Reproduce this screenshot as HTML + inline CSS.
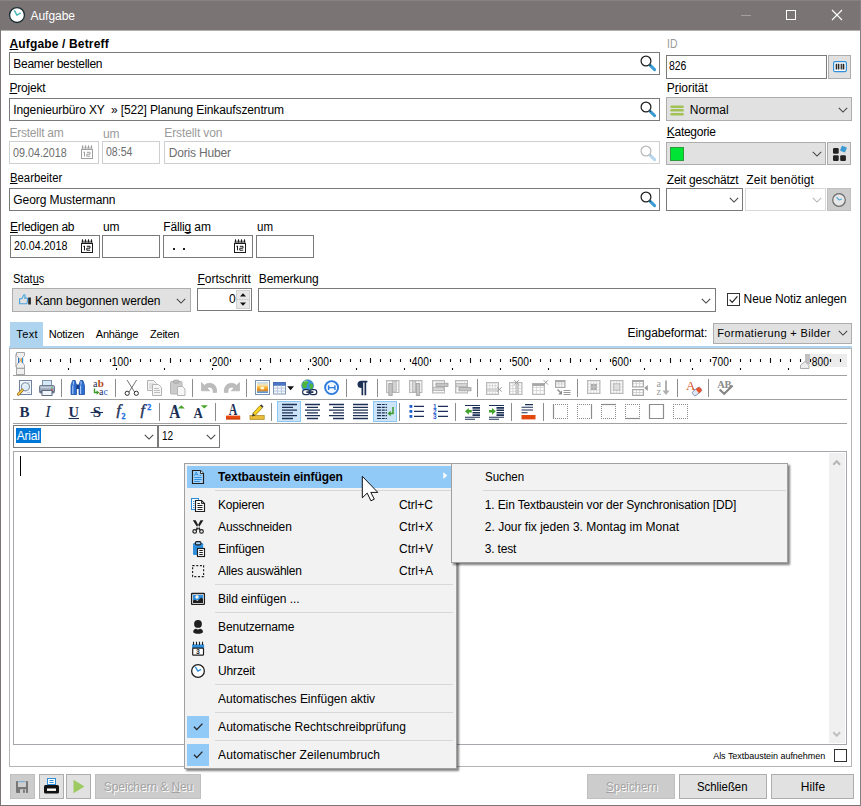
<!DOCTYPE html>
<html><head><meta charset="utf-8"><title>Aufgabe</title>
<style>
html,body{margin:0;padding:0;background:#fff;}
body{width:861px;height:806px;position:relative;overflow:hidden;font-family:"Liberation Sans",sans-serif;}
body>div,body>span,body>svg{position:absolute;display:block;}
svg{overflow:visible;}
u{text-decoration:underline;text-underline-offset:1px;text-decoration-skip-ink:none;}
</style></head><body>
<div style="left:0px;top:0px;width:861px;height:806px;background:#fff;border:1px solid #7a7574;box-sizing:border-box;"></div>
<div style="left:0px;top:0px;width:861px;height:30px;background:#7a7574;"></div>
<div style="left:0px;top:30px;width:861px;height:1px;background:#b3b0af;"></div>
<div style="left:0px;top:0px;width:861px;height:1px;background:#878382;"></div>
<div style="left:0px;top:30px;width:1px;height:776px;background:#7a7574;"></div>
<div style="left:860px;top:0px;width:1px;height:806px;background:#858180;"></div>
<div style="left:0px;top:805px;width:861px;height:1px;background:#7a7574;"></div>
<svg style="left:8px;top:6px;" width="18" height="18" viewBox="0 0 18 18"><circle cx="9" cy="9" r="7.450" fill="#fff" stroke="#1a2e33" stroke-width="1.350"/><path d="M6.300 4.400L8.900 9.200L12.700 6.800" stroke="#4bb8b8" stroke-width="1.500" fill="none" stroke-linejoin="round"/></svg>
<span style="left:30.50px;top:6.00px;font:12px/20px 'Liberation Sans',sans-serif;color:#fff;white-space:pre;letter-spacing:-0.042px;">Aufgabe</span>
<div style="left:741px;top:15px;width:10px;height:1px;background:#a39f9e;"></div>
<div style="left:786px;top:10px;width:10px;height:10px;border:1px solid #fff;box-sizing:border-box;"></div>
<svg style="left:831px;top:9px;" width="12" height="12" viewBox="0 0 12 12"><path d="M1 1 L11 11 M11 1 L1 11" stroke="#fff" stroke-width="1.1"/></svg>
<span style="left:9.50px;top:34.00px;font:bold 12px/20px 'Liberation Sans',sans-serif;color:#000;white-space:pre;letter-spacing:0.153px;"><u>A</u>ufgabe / Betreff</span>
<div style="left:9px;top:52px;width:651px;height:23px;background:#fff;border:1px solid #7a7a7a;box-sizing:border-box;"></div>
<span style="left:13.30px;top:54.00px;font:12px/20px 'Liberation Sans',sans-serif;color:#000;white-space:pre;letter-spacing:-0.278px;">Beamer bestellen</span>
<svg style="left:638px;top:53px;" width="20" height="20" viewBox="0 0 20 20"><circle cx="8" cy="8" r="4.9" fill="none" stroke="#1f1f1f" stroke-width="1.25"/><path d="M12.2 12.4 L16.6 16.6" stroke="#3d9bd4" stroke-width="3.1" stroke-linecap="round"/><path d="M11.4 11.4 L12.6 12.6" stroke="#1f1f1f" stroke-width="1.3"/></svg>
<span style="left:9.50px;top:78.00px;font:12px/20px 'Liberation Sans',sans-serif;color:#000;white-space:pre;letter-spacing:-0.196px;"><u>P</u>rojekt</span>
<div style="left:9px;top:98px;width:651px;height:23px;background:#fff;border:1px solid #7a7a7a;box-sizing:border-box;"></div>
<span style="left:13.30px;top:100.00px;font:12px/20px 'Liberation Sans',sans-serif;color:#000;white-space:pre;letter-spacing:-0.123px;">Ingenieurbüro XY  » [522] Planung Einkaufszentrum</span>
<svg style="left:638px;top:99px;" width="20" height="20" viewBox="0 0 20 20"><circle cx="8" cy="8" r="4.9" fill="none" stroke="#1f1f1f" stroke-width="1.25"/><path d="M12.2 12.4 L16.6 16.6" stroke="#3d9bd4" stroke-width="3.1" stroke-linecap="round"/><path d="M11.4 11.4 L12.6 12.6" stroke="#1f1f1f" stroke-width="1.3"/></svg>
<span style="left:9.50px;top:123.00px;font:12px/20px 'Liberation Sans',sans-serif;color:#9a9a9a;white-space:pre;letter-spacing:-0.242px;">Erstellt am</span>
<span style="left:103.00px;top:124.00px;font:12px/20px 'Liberation Sans',sans-serif;color:#9a9a9a;white-space:pre;letter-spacing:-0.125px;">um</span>
<span style="left:164.30px;top:123.00px;font:12px/20px 'Liberation Sans',sans-serif;color:#9a9a9a;white-space:pre;letter-spacing:-0.107px;">Erstellt von</span>
<div style="left:9px;top:141px;width:90px;height:23px;background:#fff;border:1px solid #cfcfcf;box-sizing:border-box;"></div>
<span style="left:13.30px;top:143.00px;font:12px/20px 'Liberation Sans',sans-serif;color:#6d6d6d;white-space:pre;transform:scaleX(0.8950);transform-origin:0 0;">09.04.2018</span>
<svg style="left:81px;top:145px;" width="12" height="14" viewBox="0 0 12 14"><rect x="0.500" y="1.600" width="11" height="3.400" fill="#d4d4d4"/><path d="M1.500 0.300v3.200 M4.500 0.300v3.200 M7.500 0.300v3.200 M10.500 0.300v3.200" stroke="#a0a0a0" stroke-width="1"/><rect x="0.500" y="4.500" width="11" height="9" fill="#fff" stroke="#a0a0a0" stroke-width="1"/><path d="M3.500 6.800v4.600 M2.400 7.300h1.100 M5.800 7.300h3.200v1.900h-3.200v2h3.400" fill="none" stroke="#a0a0a0" stroke-width="1"/></svg>
<div style="left:102px;top:141px;width:58px;height:23px;background:#fff;border:1px solid #cfcfcf;box-sizing:border-box;"></div>
<span style="left:105.60px;top:142.00px;font:12px/20px 'Liberation Sans',sans-serif;color:#6d6d6d;white-space:pre;transform:scaleX(0.8800);transform-origin:0 0;">08:54</span>
<div style="left:164px;top:141px;width:496px;height:23px;background:#fff;border:1px solid #cfcfcf;box-sizing:border-box;"></div>
<span style="left:168.80px;top:143.00px;font:12px/20px 'Liberation Sans',sans-serif;color:#6d6d6d;white-space:pre;letter-spacing:-0.180px;">Doris Huber</span>
<svg style="left:638px;top:143px;" width="20" height="20" viewBox="0 0 20 20"><circle cx="8" cy="8" r="4.9" fill="none" stroke="#b9b9b9" stroke-width="1.25"/><path d="M12.2 12.4 L16.6 16.6" stroke="#b5d6ee" stroke-width="3.1" stroke-linecap="round"/><path d="M11.4 11.4 L12.6 12.6" stroke="#b9b9b9" stroke-width="1.3"/></svg>
<span style="left:9.50px;top:168.00px;font:12px/20px 'Liberation Sans',sans-serif;color:#000;white-space:pre;transform:scaleX(0.9427);transform-origin:0 0;"><u>B</u>earbeiter</span>
<div style="left:9px;top:188px;width:651px;height:23px;background:#fff;border:1px solid #7a7a7a;box-sizing:border-box;"></div>
<span style="left:13.30px;top:190.00px;font:12px/20px 'Liberation Sans',sans-serif;color:#000;white-space:pre;letter-spacing:-0.078px;">Georg Mustermann</span>
<svg style="left:638px;top:189px;" width="20" height="20" viewBox="0 0 20 20"><circle cx="8" cy="8" r="4.9" fill="none" stroke="#1f1f1f" stroke-width="1.25"/><path d="M12.2 12.4 L16.6 16.6" stroke="#3d9bd4" stroke-width="3.1" stroke-linecap="round"/><path d="M11.4 11.4 L12.6 12.6" stroke="#1f1f1f" stroke-width="1.3"/></svg>
<span style="left:10.00px;top:217.00px;font:12px/20px 'Liberation Sans',sans-serif;color:#000;white-space:pre;letter-spacing:-0.261px;"><u>E</u>rledigen ab</span>
<span style="left:103.00px;top:217.00px;font:12px/20px 'Liberation Sans',sans-serif;color:#000;white-space:pre;letter-spacing:-0.125px;">um</span>
<span style="left:163.30px;top:217.00px;font:12px/20px 'Liberation Sans',sans-serif;color:#000;white-space:pre;letter-spacing:-0.141px;">Fälli<u>g</u> am</span>
<span style="left:257.00px;top:217.00px;font:12px/20px 'Liberation Sans',sans-serif;color:#000;white-space:pre;transform:scaleX(0.9624);transform-origin:0 0;">um</span>
<div style="left:10px;top:235px;width:90px;height:23px;background:#fff;border:1px solid #7a7a7a;box-sizing:border-box;"></div>
<span style="left:14.20px;top:236.00px;font:12px/20px 'Liberation Sans',sans-serif;color:#000;white-space:pre;transform:scaleX(0.8883);transform-origin:0 0;">20.04.2018</span>
<svg style="left:81px;top:239px;" width="12" height="14" viewBox="0 0 12 14"><rect x="0.500" y="1.600" width="11" height="3.400" fill="#8a8a8a"/><path d="M1.500 0.300v3.200 M4.500 0.300v3.200 M7.500 0.300v3.200 M10.500 0.300v3.200" stroke="#1a1a1a" stroke-width="1"/><rect x="0.500" y="4.500" width="11" height="9" fill="#fff" stroke="#1a1a1a" stroke-width="1"/><path d="M3.500 6.800v4.600 M2.400 7.300h1.100 M5.800 7.300h3.200v1.900h-3.200v2h3.400" fill="none" stroke="#1a1a1a" stroke-width="1"/></svg>
<div style="left:102px;top:235px;width:58px;height:23px;background:#fff;border:1px solid #7a7a7a;box-sizing:border-box;"></div>
<div style="left:163px;top:235px;width:90px;height:23px;background:#fff;border:1px solid #7a7a7a;box-sizing:border-box;"></div>
<div style="left:173px;top:248px;width:2px;height:2px;background:#222;"></div>
<div style="left:183px;top:248px;width:2px;height:2px;background:#222;"></div>
<svg style="left:234px;top:239px;" width="12" height="14" viewBox="0 0 12 14"><rect x="0.500" y="1.600" width="11" height="3.400" fill="#8a8a8a"/><path d="M1.500 0.300v3.200 M4.500 0.300v3.200 M7.500 0.300v3.200 M10.500 0.300v3.200" stroke="#1a1a1a" stroke-width="1"/><rect x="0.500" y="4.500" width="11" height="9" fill="#fff" stroke="#1a1a1a" stroke-width="1"/><path d="M3.500 6.800v4.600 M2.400 7.300h1.100 M5.800 7.300h3.200v1.900h-3.200v2h3.400" fill="none" stroke="#1a1a1a" stroke-width="1"/></svg>
<div style="left:256px;top:235px;width:58px;height:23px;background:#fff;border:1px solid #7a7a7a;box-sizing:border-box;"></div>
<span style="left:12.50px;top:269.00px;font:12px/20px 'Liberation Sans',sans-serif;color:#000;white-space:pre;transform:scaleX(0.9206);transform-origin:0 0;">Stat<u>u</u>s</span>
<div style="left:12px;top:288px;width:179px;height:24px;background:#e1e1e1;border:1px solid #adadad;box-sizing:border-box;"></div>
<svg style="left:18px;top:293px;" width="14" height="14" viewBox="0 0 14 14"><path d="M1.600 5.800h2.200l2-3.700c.4-.7 1.400-.3 1.300.5l-.4 2.500h2.100c.6 0 1 .5.900 1.100l-.6 3.700c-.1.500-.5.900-1 .900h-6.500z" fill="none" stroke="#4aa3df" stroke-width="1.100"/><rect x="10.200" y="4.500" width="2.700" height="7" fill="#2b2b2b"/></svg>
<span style="left:35.00px;top:291.00px;font:12px/20px 'Liberation Sans',sans-serif;color:#000;white-space:pre;letter-spacing:-0.105px;">Kann begonnen werden</span>
<svg style="left:174.5px;top:296.5px;" width="12" height="8" viewBox="0 0 12 8"><path d="M1.7999999999999998 1.9 L6 6.1 L10.2 1.9" fill="none" stroke="#444" stroke-width="1.05"/></svg>
<span style="left:197.50px;top:269.00px;font:12px/20px 'Liberation Sans',sans-serif;color:#000;white-space:pre;letter-spacing:-0.007px;"><u>F</u>ortschritt</span>
<div style="left:197px;top:288px;width:55px;height:23px;background:#fff;border:1px solid #7a7a7a;box-sizing:border-box;"></div>
<span style="left:228.90px;top:289.00px;font:12px/20px 'Liberation Sans',sans-serif;color:#000;white-space:pre;">0</span>
<div style="left:236px;top:290px;width:14px;height:10px;background:#e8e8e8;border:1px solid #d0d0d0;box-sizing:border-box;"></div>
<div style="left:236px;top:299px;width:14px;height:10px;background:#e8e8e8;border:1px solid #d0d0d0;box-sizing:border-box;"></div>
<svg style="left:236px;top:290px;" width="14" height="19" viewBox="0 0 14 19"><path d="M4 6.500L7 3.200L10 6.500z M4 12.400L7 15.700L10 12.400z" fill="#111"/></svg>
<span style="left:258.80px;top:269.00px;font:12px/20px 'Liberation Sans',sans-serif;color:#000;white-space:pre;letter-spacing:-0.172px;">Bemerkung</span>
<div style="left:258px;top:288px;width:458px;height:24px;background:#fff;border:1px solid #7a7a7a;box-sizing:border-box;"></div>
<svg style="left:700px;top:296.5px;" width="12" height="8" viewBox="0 0 12 8"><path d="M1.7999999999999998 1.9 L6 6.1 L10.2 1.9" fill="none" stroke="#444" stroke-width="1.05"/></svg>
<div style="left:727px;top:293px;width:13px;height:13px;background:#fff;border:1px solid #333;box-sizing:border-box;"></div>
<svg style="left:727px;top:293px;" width="13" height="13" viewBox="0 0 13 13"><path d="M2.6 6.6L5.2 9.4L10.4 3.4" fill="none" stroke="#222" stroke-width="1.2"/></svg>
<span style="left:743.60px;top:289.00px;font:12px/20px 'Liberation Sans',sans-serif;color:#000;white-space:pre;letter-spacing:-0.134px;">Neue Notiz anlegen</span>
<span style="left:666.60px;top:34.00px;font:12px/20px 'Liberation Sans',sans-serif;color:#9a9a9a;white-space:pre;transform:scaleX(0.8667);transform-origin:0 0;">ID</span>
<div style="left:666px;top:55px;width:161px;height:24px;background:#fff;border:1px solid #7a7a7a;box-sizing:border-box;"></div>
<span style="left:669.40px;top:56.00px;font:12px/20px 'Liberation Sans',sans-serif;color:#000;white-space:pre;transform:scaleX(0.8700);transform-origin:0 0;">826</span>
<div style="left:828px;top:55px;width:23px;height:24px;background:#e1e1e1;border:1px solid #adadad;box-sizing:border-box;"></div>
<svg style="left:833px;top:61px;" width="14" height="12" viewBox="0 0 14 12"><rect x="0.600" y="0.600" width="12.800" height="10" rx="1.500" fill="#fff" stroke="#2f8fdc" stroke-width="1.200"/><path d="M3.300 2.800v5.600M5.300 2.800v5.600M8.800 2.800v5.600M10.700 2.800v5.600" stroke="#111" stroke-width="1.200"/><path d="M7 2.800v5.600" stroke="#111" stroke-width="0.700"/></svg>
<span style="left:666.80px;top:78.00px;font:12px/20px 'Liberation Sans',sans-serif;color:#000;white-space:pre;letter-spacing:-0.047px;">P<u>r</u>iorität</span>
<div style="left:666px;top:97px;width:186px;height:24px;background:#e1e1e1;border:1px solid #adadad;box-sizing:border-box;"></div>
<svg style="left:670px;top:105px;" width="14" height="11" viewBox="0 0 14 11"><rect x="0.300" y="0.400" width="13.500" height="2.500" rx="1.200" fill="#a2c255"/><rect x="0.300" y="4.100" width="13.500" height="2.500" rx="1.200" fill="#a2c255"/><rect x="0.300" y="7.900" width="13.500" height="2.500" rx="1.200" fill="#a2c255"/></svg>
<span style="left:689.80px;top:100.00px;font:12px/20px 'Liberation Sans',sans-serif;color:#000;white-space:pre;letter-spacing:0.055px;">Normal</span>
<svg style="left:836.5px;top:106px;" width="12" height="8" viewBox="0 0 12 8"><path d="M1.7999999999999998 1.9 L6 6.1 L10.2 1.9" fill="none" stroke="#444" stroke-width="1.05"/></svg>
<span style="left:666.80px;top:122.00px;font:12px/20px 'Liberation Sans',sans-serif;color:#000;white-space:pre;letter-spacing:-0.284px;"><u>K</u>ategorie</span>
<div style="left:666px;top:142px;width:160px;height:23px;background:#e1e1e1;border:1px solid #adadad;box-sizing:border-box;"></div>
<div style="left:670px;top:147px;width:14px;height:14px;background:#00e436;border:1px solid #2e9a3c;box-sizing:border-box;"></div>
<svg style="left:810.5px;top:150px;" width="12" height="8" viewBox="0 0 12 8"><path d="M1.7999999999999998 1.9 L6 6.1 L10.2 1.9" fill="none" stroke="#444" stroke-width="1.05"/></svg>
<div style="left:827px;top:142px;width:24px;height:23px;background:#e1e1e1;border:1px solid #adadad;box-sizing:border-box;"></div>
<svg style="left:832px;top:145px;" width="16" height="17" viewBox="0 0 16 17"><rect x="1" y="3" width="5.700" height="5.700" rx="1.200" fill="#222"/><rect x="1" y="10.200" width="5.700" height="5.700" rx="1.200" fill="#222"/><rect x="8.200" y="10.200" width="5.700" height="5.700" rx="1.200" fill="#222"/><rect x="8.800" y="1.400" width="5.400" height="5.400" rx="0.800" fill="#3d9bd4" transform="rotate(22 11.500 4.100)"/></svg>
<span style="left:666.80px;top:170.00px;font:12px/20px 'Liberation Sans',sans-serif;color:#000;white-space:pre;letter-spacing:-0.219px;">Zeit geschätzt</span>
<span style="left:746.30px;top:170.00px;font:12px/20px 'Liberation Sans',sans-serif;color:#000;white-space:pre;letter-spacing:0.125px;">Zeit benötigt</span>
<div style="left:666px;top:188px;width:77px;height:23px;background:#fff;border:1px solid #7a7a7a;box-sizing:border-box;"></div>
<svg style="left:727.5px;top:195.5px;" width="12" height="8" viewBox="0 0 12 8"><path d="M1.7999999999999998 1.9 L6 6.1 L10.2 1.9" fill="none" stroke="#444" stroke-width="1.05"/></svg>
<div style="left:745px;top:188px;width:81px;height:23px;background:#fff;border:1px solid #d9d9d9;box-sizing:border-box;"></div>
<svg style="left:810.5px;top:195.5px;" width="12" height="8" viewBox="0 0 12 8"><path d="M1.7999999999999998 1.9 L6 6.1 L10.2 1.9" fill="none" stroke="#b5b5b5" stroke-width="1.05"/></svg>
<div style="left:827px;top:188px;width:24px;height:23px;background:#cccccc;border:1px solid #bfbfbf;box-sizing:border-box;"></div>
<svg style="left:831px;top:192px;" width="16" height="16" viewBox="0 0 16 16"><circle cx="8" cy="8" r="6.300" fill="#e6e6e6" stroke="#6a6a6a" stroke-width="1.200"/><path d="M8 8L5.600 5.200M8 8L11 7" stroke="#58a9d8" stroke-width="1.200"/></svg>
<div style="left:10px;top:322px;width:33px;height:25px;background:#aed4f0;"></div>
<div style="left:9px;top:346px;width:843px;height:2px;background:#aed4f0;"></div>
<span style="left:16.30px;top:324.00px;font:11px/20px 'Liberation Sans',sans-serif;color:#000;white-space:pre;letter-spacing:0.358px;">Text</span>
<span style="left:48.80px;top:324.00px;font:11px/20px 'Liberation Sans',sans-serif;color:#000;white-space:pre;letter-spacing:-0.292px;">Notizen</span>
<span style="left:95.80px;top:324.00px;font:11px/20px 'Liberation Sans',sans-serif;color:#000;white-space:pre;letter-spacing:-0.250px;">Anhänge</span>
<span style="left:150.00px;top:324.00px;font:11px/20px 'Liberation Sans',sans-serif;color:#000;white-space:pre;letter-spacing:-0.225px;">Zeiten</span>
<span style="left:627.60px;top:323.00px;font:12px/20px 'Liberation Sans',sans-serif;color:#000;white-space:pre;letter-spacing:-0.121px;">Eingabeformat:</span>
<div style="left:713px;top:323px;width:139px;height:21px;background:#e1e1e1;border:1px solid #adadad;box-sizing:border-box;"></div>
<span style="left:717.30px;top:323.00px;font:11px/20px 'Liberation Sans',sans-serif;color:#000;white-space:pre;letter-spacing:0.354px;">Formatierung + Bilder</span>
<svg style="left:836.5px;top:329.3px;" width="12" height="8" viewBox="0 0 12 8"><path d="M1.7999999999999998 1.9 L6 6.1 L10.2 1.9" fill="none" stroke="#444" stroke-width="1.05"/></svg>
<div style="left:9px;top:348px;width:843px;height:419px;background:#fff;border:1px solid #b4b4b4;box-sizing:border-box;"></div>
<svg style="left:13px;top:348px;" width="838" height="28" viewBox="0 0 838 28"><rect x="797" y="6" width="37" height="13" fill="#ececec"/><path d="M17.5 11v3M27.5 11v3M37.5 11v3M47.5 11v3M57.5 10v5M67.5 11v3M77.5 11v3M87.5 11v3M97.5 11v3M117.5 11v3M127.5 11v3M137.5 11v3M147.5 11v3M157.5 10v5M167.5 11v3M177.5 11v3M187.5 11v3M197.5 11v3M217.5 11v3M227.5 11v3M237.5 11v3M247.5 11v3M257.5 10v5M267.5 11v3M277.5 11v3M287.5 11v3M297.5 11v3M317.5 11v3M327.5 11v3M337.5 11v3M347.5 11v3M357.5 10v5M367.5 11v3M377.5 11v3M387.5 11v3M397.5 11v3M417.5 11v3M427.5 11v3M437.5 11v3M447.5 11v3M457.5 10v5M467.5 11v3M477.5 11v3M487.5 11v3M497.5 11v3M517.5 11v3M527.5 11v3M537.5 11v3M547.5 11v3M557.5 10v5M567.5 11v3M577.5 11v3M587.5 11v3M597.5 11v3M617.5 11v3M627.5 11v3M637.5 11v3M647.5 11v3M657.5 10v5M667.5 11v3M677.5 11v3M687.5 11v3M697.5 11v3M717.5 11v3M727.5 11v3M737.5 11v3M747.5 11v3M757.5 10v5M767.5 11v3M777.5 11v3M787.5 11v3M797.5 11v3M817.5 11v3M827.5 11v3" stroke="#111" stroke-width="1.1"/><path d="M97.5 11v3M117.5 11v3M197.5 11v3M217.5 11v3M297.5 11v3M317.5 11v3M397.5 11v3M417.5 11v3M497.5 11v3M517.5 11v3M597.5 11v3M617.5 11v3M697.5 11v3M717.5 11v3M797.5 11v3M817.5 11v3" stroke="#111" stroke-width="1.1"/><path d="M55.5 20v2M103.5 20v2M151.5 20v2M199.5 20v2M247.5 20v2M295.5 20v2M343.5 20v2M391.5 20v2M439.5 20v2M487.5 20v2M535.5 20v2M583.5 20v2M631.5 20v2M679.5 20v2M727.5 20v2M775.5 20v2" stroke="#111" stroke-width="1.1"/><text x="107.3" y="17.8" text-anchor="middle" font-family="Liberation Sans,sans-serif" font-size="12" textLength="17" lengthAdjust="spacingAndGlyphs" fill="#000">100</text><text x="207.3" y="17.8" text-anchor="middle" font-family="Liberation Sans,sans-serif" font-size="12" textLength="17" lengthAdjust="spacingAndGlyphs" fill="#000">200</text><text x="307.3" y="17.8" text-anchor="middle" font-family="Liberation Sans,sans-serif" font-size="12" textLength="17" lengthAdjust="spacingAndGlyphs" fill="#000">300</text><text x="407.3" y="17.8" text-anchor="middle" font-family="Liberation Sans,sans-serif" font-size="12" textLength="17" lengthAdjust="spacingAndGlyphs" fill="#000">400</text><text x="507.3" y="17.8" text-anchor="middle" font-family="Liberation Sans,sans-serif" font-size="12" textLength="17" lengthAdjust="spacingAndGlyphs" fill="#000">500</text><text x="607.3" y="17.8" text-anchor="middle" font-family="Liberation Sans,sans-serif" font-size="12" textLength="17" lengthAdjust="spacingAndGlyphs" fill="#000">600</text><text x="707.3" y="17.8" text-anchor="middle" font-family="Liberation Sans,sans-serif" font-size="12" textLength="17" lengthAdjust="spacingAndGlyphs" fill="#000">700</text><text x="807.3" y="17.8" text-anchor="middle" font-family="Liberation Sans,sans-serif" font-size="12" textLength="17" lengthAdjust="spacingAndGlyphs" fill="#000">800</text><rect x="2" y="6" width="1.6" height="13" fill="#c8c8c8"/><path d="M3.5 4.5h8v3L7.5 12L3.5 7.5z" fill="#f0f0f0" stroke="#a6a6a6"/><path d="M7.5 12L11.5 17.2v3h-8v-3z" fill="#f0f0f0" stroke="#a6a6a6"/><rect x="3.5" y="20.5" width="8" height="6" fill="#f0f0f0" stroke="#a6a6a6"/><rect x="5" y="10" width="1.2" height="5" fill="#2a6fc0"/><rect x="7.6" y="10.500" width="1.400" height="4" fill="#f2a640"/><rect x="9" y="10" width="1.200" height="5" fill="#2a8fe0"/><rect x="792" y="6" width="5" height="10" fill="#c0c0c0"/><path d="M787.500 17.200L792 13.500L796 17.200v3.300h-8.500z" fill="#ececec" stroke="#adadad"/></svg>
<div style="left:13px;top:375px;width:834px;height:1px;background:#a0a0a0;"></div>
<div style="left:13px;top:399px;width:834px;height:1px;background:#a0a0a0;"></div>
<div style="left:13px;top:423px;width:834px;height:1px;background:#a0a0a0;"></div>
<svg style="left:16px;top:380px;" width="16" height="16" viewBox="0 0 16 16"><rect x="3.500" y="0.500" width="12" height="14" fill="#f4f7fb" stroke="#6f82a0"/><path d="M11 12.500h3M12 2.500h2" stroke="#c3cfdf"/><circle cx="9.400" cy="6.800" r="4.100" fill="#dcecf8" stroke="#8595ad" stroke-width="1.100"/><path d="M7.400 5.600a2.600 2.600 0 0 1 2.600-1.200" stroke="#fff" fill="none"/><path d="M6.200 10.200L2.400 14.200" stroke="#8a6a20" stroke-width="3" stroke-linecap="round"/><path d="M6.200 10.200L2.400 14.200" stroke="#efc04a" stroke-width="1.800" stroke-linecap="round"/></svg>
<svg style="left:39px;top:380px;" width="16" height="16" viewBox="0 0 16 16"><rect x="3.500" y="0.500" width="9" height="6" fill="#d5e8f8" stroke="#7f92aa"/><rect x="0.500" y="5.500" width="15" height="7.500" rx="1.200" fill="#98a5b8" stroke="#6c7a90"/><rect x="1.500" y="6.500" width="13" height="1.800" fill="#c4cedb"/><rect x="1.200" y="11" width="13.600" height="1.600" fill="#56637a"/><rect x="3" y="10.500" width="10" height="5" fill="#eef5fc" stroke="#5e6b80"/><rect x="12.200" y="7.200" width="1.400" height="1.300" fill="#3cb54a"/><rect x="12.200" y="9.200" width="1.400" height="1.300" fill="#e0392b"/></svg>
<div style="left:61px;top:379px;width:1px;height:18px;background:#8c8c8c;"></div>
<svg style="left:70px;top:380px;" width="16" height="16" viewBox="0 0 16 16"><path d="M2.600 0.500h2.600l1.300 5v9h-5.500v-9z" fill="#2c6cd0" stroke="#1b4ea6" stroke-width="0.800"/><path d="M10.300 0.500h2.600l1.600 5v9h-5.500v-9z" fill="#2c6cd0" stroke="#1b4ea6" stroke-width="0.800"/><rect x="6.400" y="4.500" width="2.700" height="4.500" fill="#173f8c"/><path d="M2.800 5.500v8.500M10.600 5.500v8.500" stroke="#a9c8f2" stroke-width="1.200"/><path d="M3.400 1.200v3.500M11 1.200v3.500" stroke="#c4dbf8" stroke-width="0.900"/></svg>
<svg style="left:93px;top:380px;" width="16" height="16" viewBox="0 0 16 16"><text x="0" y="7" font-family="Liberation Serif,serif" font-size="10" fill="#1c2f55">a</text><text x="4.8" y="7" font-family="Liberation Serif,serif" font-size="11" font-weight="bold" fill="#b5471c">b</text><path d="M1.5 8.5v4h3.2" stroke="#3c9a2c" stroke-width="1.4" fill="none"/><path d="M3.6 10.2L6.4 12.5L3.6 14.8z" fill="#3c9a2c"/><text x="6" y="15.3" font-family="Liberation Serif,serif" font-size="10" fill="#1c2f55">a</text><text x="10.6" y="15.3" font-family="Liberation Serif,serif" font-size="10" fill="#2a62d8">c</text></svg>
<div style="left:115px;top:379px;width:1px;height:18px;background:#8c8c8c;"></div>
<svg style="left:124px;top:380px;" width="16" height="16" viewBox="0 0 16 16"><path d="M3 0L10.6 12M12.6 0L5 12" stroke="#5a5a5a" stroke-width="0.85" fill="none"/><circle cx="3.2" cy="13.3" r="2.1" fill="#fff" stroke="#222" stroke-width="0.95"/><circle cx="12.3" cy="13.300" r="2.100" fill="#fff" stroke="#222" stroke-width="0.950"/></svg>
<svg style="left:147px;top:380px;" width="16" height="16" viewBox="0 0 16 16"><path d="M0.5 0.5h6l3 3v7h-9z" fill="#f3f3f3" stroke="#b3b3b3"/><path d="M2 4h5M2 6h5M2 8h5" stroke="#c9c9c9"/><path d="M5.5 4.5h6l3 3v8h-9z" fill="#f6f6f6" stroke="#b3b3b3"/><path d="M7 8.5h5M7 10.5h6M7 12.5h6" stroke="#bdbdbd"/></svg>
<svg style="left:170px;top:380px;" width="16" height="16" viewBox="0 0 16 16"><rect x="0.5" y="1.5" width="11.5" height="12.5" rx="1" fill="#cbcbcb" stroke="#b3b3b3"/><rect x="3.5" y="0.2" width="5.5" height="3" rx="0.8" fill="#bdbdbd" stroke="#ababab"/><path d="M7.5 6.5h5l2.5 2.5v6.5h-7.5z" fill="#f6f6f6" stroke="#b3b3b3"/></svg>
<div style="left:192px;top:379px;width:1px;height:18px;background:#8c8c8c;"></div>
<svg style="left:201px;top:380px;" width="16" height="16" viewBox="0 0 16 16"><path d="M0.5 2.500L0.500 10.800L8.800 10.800L6 8C7.600 6.600 10.800 6.800 11.800 9.500C12.200 10.600 12.200 11.600 12 12.400L15.600 12.400C16.100 8.600 14.600 5.200 11.600 3.900C8.600 2.600 5.400 3.400 3.400 5.400Z" fill="#bcbcbc" stroke="#adadad" stroke-width="0.6"/></svg>
<svg style="left:224px;top:380px;" width="16" height="16" viewBox="0 0 16 16"><g transform="translate(16,0) scale(-1,1)"><path d="M0.5 2.500L0.500 10.800L8.800 10.800L6 8C7.600 6.600 10.800 6.800 11.800 9.500C12.200 10.600 12.200 11.600 12 12.400L15.600 12.400C16.100 8.600 14.600 5.200 11.600 3.900C8.600 2.600 5.400 3.400 3.400 5.400Z" fill="#bcbcbc" stroke="#adadad" stroke-width="0.6"/></g></svg>
<div style="left:246px;top:379px;width:1px;height:18px;background:#8c8c8c;"></div>
<svg style="left:255px;top:380px;" width="16" height="16" viewBox="0 0 16 16"><defs><linearGradient id="sky" x1="0" y1="0" x2="0" y2="1"><stop offset="0" stop-color="#bcd6f2"/><stop offset="0.28" stop-color="#f6e6b0"/><stop offset="0.5" stop-color="#f8b232"/><stop offset="0.72" stop-color="#e28a1a"/><stop offset="0.84" stop-color="#c9924a"/><stop offset="0.88" stop-color="#6ea2d8"/><stop offset="1" stop-color="#4f8fd6"/></linearGradient></defs><rect x="0.500" y="0.500" width="14" height="14" fill="#fff" stroke="#7a8eae"/><rect x="2" y="2" width="11" height="11" fill="url(#sky)"/><ellipse cx="7.300" cy="8" rx="2.200" ry="1.500" fill="#fff6d0"/></svg>
<svg style="left:273px;top:380px;" width="22" height="16" viewBox="0 0 22 16"><rect x="0.500" y="2.500" width="12" height="11.500" fill="#f4f7fc" stroke="#8296b8"/><rect x="0.500" y="2.500" width="12" height="2.800" fill="#4a76c8" stroke="#3a62b0" stroke-width="0.600"/><path d="M1 8.200h11M1 11.100h11M4.500 5.500v8.500M8.500 5.500v8.500" stroke="#b4c4dc" stroke-width="0.900"/><path d="M14.200 6.300h6.800l-3.400 3.900z" fill="#111"/></svg>
<svg style="left:301px;top:380px;" width="16" height="16" viewBox="0 0 16 16"><circle cx="6.600" cy="5.700" r="5.900" fill="#3a92e0" stroke="#2a6fb4" stroke-width="0.700"/><path d="M2.200 2.200c1.400-1.600 3.800-2 5-.8c.8 1-.4 1.800-1.200 2.800c-.8 1.200.4 2.400-.6 3.600c-1 .8-2.600 .4-3.600-.6c-1.200-1.400-.8-3.600 .4-5z" fill="#4db53a"/><path d="M8.600 3.600c1.400-.6 3 .2 3.600 1.600c.2 1.600-.6 3.200-2 4.200c-1.200.2-1.800-.8-1.400-2c.4-1.200-1-2.800-.2-3.800z" fill="#4db53a"/><path d="M3 1.800c1-.8 2.400-1 3.400-.6" stroke="#c8f0a0" stroke-width="0.700" fill="none"/><rect x="1.600" y="9.600" width="7" height="5" rx="2.400" fill="#fff" stroke="#1c2f55" stroke-width="1.150"/><rect x="8.800" y="9.600" width="7" height="5" rx="2.400" fill="#fff" stroke="#1c2f55" stroke-width="1.150"/><path d="M5.400 12.100h7" stroke="#1c2f55" stroke-width="1.700"/></svg>
<svg style="left:324px;top:380px;" width="16" height="16" viewBox="0 0 16 16"><circle cx="7.600" cy="7.600" r="6.500" fill="#f2f7fe" stroke="#2a7ae0" stroke-width="1.900"/><path d="M4.600 5.200v4.800M10.900 5.200v4.800M4.600 7.600h6.300" stroke="#2a7ae0" stroke-width="1.400" fill="none"/></svg>
<div style="left:346px;top:379px;width:1px;height:18px;background:#8c8c8c;"></div>
<svg style="left:357px;top:380px;" width="11" height="16" viewBox="0 0 11 16"><path d="M4.2 0.8h6.2v1.6h-1.2v12.8h-1.7v-12.8h-1.3v12.8h-1.7v-7.2c-2.400 0-4-1.400-4-3.600c0-2.200 1.600-3.600 3.700-3.600z" fill="#1c2f55"/></svg>
<div style="left:377px;top:379px;width:1px;height:18px;background:#8c8c8c;"></div>
<svg style="left:385px;top:380px;" width="16" height="16" viewBox="0 0 16 16"><rect x="1.5" y="0.5" width="12.5" height="12" fill="#dcdcdc" stroke="#b9b9b9"/><rect x="2.7" y="1.80" width="2.100" height="2" fill="#fff"/><rect x="11.0" y="1.80" width="2.100" height="2" fill="#fff"/><rect x="2.7" y="4.50" width="2.100" height="2" fill="#fff"/><rect x="11.0" y="4.50" width="2.100" height="2" fill="#fff"/><rect x="2.7" y="7.20" width="2.100" height="2" fill="#fff"/><rect x="11.0" y="7.20" width="2.100" height="2" fill="#fff"/><rect x="2.7" y="9.90" width="2.100" height="2" fill="#fff"/><rect x="11.0" y="9.90" width="2.100" height="2" fill="#fff"/><rect x="5.47" y="1.8" width="2.100" height="2" fill="#fff"/><rect x="8.23" y="1.8" width="2.100" height="2" fill="#fff"/><rect x="7.800" y="1" width="3.400" height="11" fill="#d6d6d6" stroke="#b0b0b0" stroke-width="0.800"/><rect x="3.800" y="3.500" width="3.400" height="12" fill="#c4c4c4" stroke="#a0a0a0" stroke-width="0.800"/></svg>
<svg style="left:408px;top:380px;" width="16" height="16" viewBox="0 0 16 16"><rect x="1.5" y="0.5" width="12.5" height="12" fill="#dcdcdc" stroke="#b9b9b9"/><rect x="2.7" y="1.80" width="2.100" height="2" fill="#fff"/><rect x="11.0" y="1.80" width="2.100" height="2" fill="#fff"/><rect x="2.7" y="4.50" width="2.100" height="2" fill="#fff"/><rect x="11.0" y="4.50" width="2.100" height="2" fill="#fff"/><rect x="2.7" y="7.20" width="2.100" height="2" fill="#fff"/><rect x="11.0" y="7.20" width="2.100" height="2" fill="#fff"/><rect x="2.7" y="9.90" width="2.100" height="2" fill="#fff"/><rect x="11.0" y="9.90" width="2.100" height="2" fill="#fff"/><rect x="5.47" y="1.8" width="2.100" height="2" fill="#fff"/><rect x="8.23" y="1.8" width="2.100" height="2" fill="#fff"/><rect x="4.300" y="1" width="3.400" height="11" fill="#d6d6d6" stroke="#b0b0b0" stroke-width="0.800"/><rect x="8.300" y="3.500" width="3.400" height="12" fill="#c4c4c4" stroke="#a0a0a0" stroke-width="0.800"/></svg>
<svg style="left:432px;top:380px;" width="16" height="16" viewBox="0 0 16 16"><rect x="0.5" y="0.5" width="12" height="12.5" fill="#dcdcdc" stroke="#b9b9b9"/><rect x="1.80" y="1.7" width="2" height="2.100" fill="#fff"/><rect x="1.80" y="10.0" width="2" height="2.100" fill="#fff"/><rect x="4.50" y="1.7" width="2" height="2.100" fill="#fff"/><rect x="4.50" y="10.0" width="2" height="2.100" fill="#fff"/><rect x="7.20" y="1.7" width="2" height="2.100" fill="#fff"/><rect x="7.20" y="10.0" width="2" height="2.100" fill="#fff"/><rect x="9.90" y="1.7" width="2" height="2.100" fill="#fff"/><rect x="9.90" y="10.0" width="2" height="2.100" fill="#fff"/><rect x="1.8" y="4.47" width="2" height="2.100" fill="#fff"/><rect x="1.8" y="7.23" width="2" height="2.100" fill="#fff"/><rect x="1" y="7.300" width="11" height="3.200" fill="#d6d6d6" stroke="#b0b0b0" stroke-width="0.800"/><rect x="4" y="3.200" width="12" height="3.200" fill="#c4c4c4" stroke="#a0a0a0" stroke-width="0.800"/></svg>
<svg style="left:455px;top:380px;" width="16" height="16" viewBox="0 0 16 16"><rect x="0.5" y="0.5" width="12" height="12.5" fill="#dcdcdc" stroke="#b9b9b9"/><rect x="1.80" y="1.7" width="2" height="2.100" fill="#fff"/><rect x="1.80" y="10.0" width="2" height="2.100" fill="#fff"/><rect x="4.50" y="1.7" width="2" height="2.100" fill="#fff"/><rect x="4.50" y="10.0" width="2" height="2.100" fill="#fff"/><rect x="7.20" y="1.7" width="2" height="2.100" fill="#fff"/><rect x="7.20" y="10.0" width="2" height="2.100" fill="#fff"/><rect x="9.90" y="1.7" width="2" height="2.100" fill="#fff"/><rect x="9.90" y="10.0" width="2" height="2.100" fill="#fff"/><rect x="1.8" y="4.47" width="2" height="2.100" fill="#fff"/><rect x="1.8" y="7.23" width="2" height="2.100" fill="#fff"/><rect x="1" y="3.600" width="11" height="3.200" fill="#d6d6d6" stroke="#b0b0b0" stroke-width="0.800"/><rect x="4" y="7.600" width="12" height="3.200" fill="#c4c4c4" stroke="#a0a0a0" stroke-width="0.800"/></svg>
<div style="left:477px;top:379px;width:1px;height:18px;background:#8c8c8c;"></div>
<svg style="left:486px;top:380px;" width="16" height="16" viewBox="0 0 16 16"><rect x="0.5" y="2.5" width="12" height="12" fill="#d4d4d4" stroke="#b9b9b9"/><rect x="1.45" y="3.45" width="1.85" height="1.85" fill="#fff"/><rect x="1.45" y="6.20" width="1.85" height="1.85" fill="#fff"/><rect x="1.45" y="11.70" width="1.85" height="1.85" fill="#fff"/><rect x="4.20" y="3.45" width="1.85" height="1.85" fill="#fff"/><rect x="4.20" y="6.20" width="1.85" height="1.85" fill="#fff"/><rect x="4.20" y="11.70" width="1.85" height="1.85" fill="#fff"/><rect x="6.95" y="3.45" width="1.85" height="1.85" fill="#fff"/><rect x="6.95" y="6.20" width="1.85" height="1.85" fill="#fff"/><rect x="6.95" y="11.70" width="1.85" height="1.85" fill="#fff"/><rect x="9.70" y="3.45" width="1.85" height="1.85" fill="#fff"/><rect x="9.70" y="6.20" width="1.85" height="1.85" fill="#fff"/><rect x="9.70" y="11.70" width="1.85" height="1.85" fill="#fff"/><path d="M11.300 7.200l4.400 4.400M15.700 7.200l-4.400 4.400" stroke="#8e8e8e" stroke-width="0.900"/></svg>
<svg style="left:509px;top:380px;" width="16" height="16" viewBox="0 0 16 16"><rect x="0.5" y="2.5" width="12.5" height="12" fill="#d4d4d4" stroke="#b9b9b9"/><rect x="1.45" y="3.45" width="1.98" height="1.85" fill="#fff"/><rect x="1.45" y="6.20" width="1.98" height="1.85" fill="#fff"/><rect x="1.45" y="8.95" width="1.98" height="1.85" fill="#fff"/><rect x="1.45" y="11.70" width="1.98" height="1.85" fill="#fff"/><rect x="4.33" y="3.45" width="1.98" height="1.85" fill="#fff"/><rect x="4.33" y="6.20" width="1.98" height="1.85" fill="#fff"/><rect x="4.33" y="8.95" width="1.98" height="1.85" fill="#fff"/><rect x="4.33" y="11.70" width="1.98" height="1.85" fill="#fff"/><rect x="10.07" y="3.45" width="1.98" height="1.85" fill="#fff"/><rect x="10.07" y="6.20" width="1.98" height="1.85" fill="#fff"/><rect x="10.07" y="8.95" width="1.98" height="1.85" fill="#fff"/><rect x="10.07" y="11.70" width="1.98" height="1.85" fill="#fff"/><rect x="6.700" y="4" width="3.200" height="10.500" fill="#c9c9c9"/><path d="M5.400 0.200l4.400 4.400M9.800 0.200l-4.400 4.400" stroke="#8e8e8e" stroke-width="0.900"/></svg>
<svg style="left:532px;top:380px;" width="17" height="16" viewBox="0 0 17 16"><rect x="0.5" y="3.5" width="12" height="11" fill="#d4d4d4" stroke="#b9b9b9"/><rect x="1.45" y="4.45" width="2.77" height="2.43" fill="#fff"/><rect x="1.45" y="7.78" width="2.77" height="2.43" fill="#fff"/><rect x="1.45" y="11.12" width="2.77" height="2.43" fill="#fff"/><rect x="5.12" y="4.45" width="2.77" height="2.43" fill="#fff"/><rect x="5.12" y="7.78" width="2.77" height="2.43" fill="#fff"/><rect x="5.12" y="11.12" width="2.77" height="2.43" fill="#fff"/><rect x="8.78" y="4.45" width="2.77" height="2.43" fill="#fff"/><rect x="8.78" y="7.78" width="2.77" height="2.43" fill="#fff"/><rect x="8.78" y="11.12" width="2.77" height="2.43" fill="#fff"/><rect x="0.500" y="3.500" width="12" height="2.400" fill="#a6a6a6"/><path d="M11.600 0.200l4.400 4.400M16 0.200l-4.400 4.400" stroke="#8e8e8e" stroke-width="0.900"/></svg>
<svg style="left:555px;top:380px;" width="16" height="16" viewBox="0 0 16 16"><rect x="0.5" y="0.5" width="9.5" height="7" fill="#cfcfcf" stroke="#a9a9a9"/><rect x="1.45" y="1.45" width="1.93" height="2.10" fill="#fff"/><rect x="1.45" y="4.45" width="1.93" height="2.10" fill="#fff"/><rect x="4.28" y="1.45" width="1.93" height="2.10" fill="#fff"/><rect x="4.28" y="4.45" width="1.93" height="2.10" fill="#fff"/><rect x="7.12" y="1.45" width="1.93" height="2.10" fill="#fff"/><rect x="7.12" y="4.45" width="1.93" height="2.10" fill="#fff"/><rect x="0.500" y="0.500" width="9.500" height="1.700" fill="#a9a9a9"/><path d="M2.500 9.500l3.500 3.500" stroke="#8c8c8c" stroke-width="1.400" fill="none"/><path d="M3.200 14.400h3.800v-3.800z" fill="#8c8c8c"/><path d="M8.500 10.500h7M8.500 12.500h7M8.500 14.500h7" stroke="#9a9a9a" stroke-width="1"/></svg>
<div style="left:577px;top:379px;width:1px;height:18px;background:#8c8c8c;"></div>
<svg style="left:586px;top:380px;" width="16" height="16" viewBox="0 0 16 16"><rect x="1.5" y="0.5" width="12.5" height="13" fill="#d4d4d4" stroke="#b9b9b9"/><rect x="2.45" y="1.45" width="1.98" height="2.10" fill="#fff"/><rect x="2.45" y="4.45" width="1.98" height="2.10" fill="#fff"/><rect x="2.45" y="7.45" width="1.98" height="2.10" fill="#fff"/><rect x="2.45" y="10.45" width="1.98" height="2.10" fill="#fff"/><rect x="5.33" y="1.45" width="1.98" height="2.10" fill="#fff"/><rect x="5.33" y="4.45" width="1.98" height="2.10" fill="#fff"/><rect x="5.33" y="7.45" width="1.98" height="2.10" fill="#fff"/><rect x="5.33" y="10.45" width="1.98" height="2.10" fill="#fff"/><rect x="8.20" y="1.45" width="1.98" height="2.10" fill="#fff"/><rect x="8.20" y="4.45" width="1.98" height="2.10" fill="#fff"/><rect x="8.20" y="7.45" width="1.98" height="2.10" fill="#fff"/><rect x="8.20" y="10.45" width="1.98" height="2.10" fill="#fff"/><rect x="11.07" y="1.45" width="1.98" height="2.10" fill="#fff"/><rect x="11.07" y="4.45" width="1.98" height="2.10" fill="#fff"/><rect x="11.07" y="7.45" width="1.98" height="2.10" fill="#fff"/><rect x="11.07" y="10.45" width="1.98" height="2.10" fill="#fff"/><rect x="4.900" y="4" width="5.800" height="6" fill="#a9a9a9"/><path d="M7.800 4v6M4.900 7h5.800" stroke="#d0d0d0" stroke-width="0.700"/></svg>
<svg style="left:609px;top:380px;" width="16" height="16" viewBox="0 0 16 16"><rect x="1.5" y="0.5" width="12.5" height="13" fill="#d4d4d4" stroke="#b9b9b9"/><rect x="2.45" y="1.45" width="1.98" height="2.10" fill="#fff"/><rect x="2.45" y="4.45" width="1.98" height="2.10" fill="#fff"/><rect x="2.45" y="7.45" width="1.98" height="2.10" fill="#fff"/><rect x="2.45" y="10.45" width="1.98" height="2.10" fill="#fff"/><rect x="5.33" y="1.45" width="1.98" height="2.10" fill="#fff"/><rect x="5.33" y="4.45" width="1.98" height="2.10" fill="#fff"/><rect x="5.33" y="7.45" width="1.98" height="2.10" fill="#fff"/><rect x="5.33" y="10.45" width="1.98" height="2.10" fill="#fff"/><rect x="8.20" y="1.45" width="1.98" height="2.10" fill="#fff"/><rect x="8.20" y="4.45" width="1.98" height="2.10" fill="#fff"/><rect x="8.20" y="7.45" width="1.98" height="2.10" fill="#fff"/><rect x="8.20" y="10.45" width="1.98" height="2.10" fill="#fff"/><rect x="11.07" y="1.45" width="1.98" height="2.10" fill="#fff"/><rect x="11.07" y="4.45" width="1.98" height="2.10" fill="#fff"/><rect x="11.07" y="7.45" width="1.98" height="2.10" fill="#fff"/><rect x="11.07" y="10.45" width="1.98" height="2.10" fill="#fff"/><rect x="4.700" y="3.800" width="6.200" height="6.400" fill="#dedede" stroke="#b0b0b0" stroke-width="0.800"/></svg>
<svg style="left:632px;top:380px;" width="16" height="16" viewBox="0 0 16 16"><rect x="0.5" y="0.5" width="11" height="6.5" fill="#cfcfcf" stroke="#a9a9a9"/><rect x="1.45" y="1.45" width="2.43" height="1.85" fill="#fff"/><rect x="1.45" y="4.20" width="2.43" height="1.85" fill="#fff"/><rect x="4.78" y="1.45" width="2.43" height="1.85" fill="#fff"/><rect x="4.78" y="4.20" width="2.43" height="1.85" fill="#fff"/><rect x="8.12" y="1.45" width="2.43" height="1.85" fill="#fff"/><rect x="8.12" y="4.20" width="2.43" height="1.85" fill="#fff"/><rect x="0.5" y="9.5" width="11" height="6" fill="#cfcfcf" stroke="#a9a9a9"/><rect x="1.45" y="10.45" width="2.43" height="1.60" fill="#fff"/><rect x="1.45" y="12.95" width="2.43" height="1.60" fill="#fff"/><rect x="4.78" y="10.45" width="2.43" height="1.60" fill="#fff"/><rect x="4.78" y="12.95" width="2.43" height="1.60" fill="#fff"/><rect x="8.12" y="10.45" width="2.43" height="1.60" fill="#fff"/><rect x="8.12" y="12.95" width="2.43" height="1.60" fill="#fff"/><rect x="0.500" y="0.500" width="11" height="1.500" fill="#a9a9a9"/><path d="M15.800 5l-3.600 3l3.600 3z" fill="#9a9a9a"/></svg>
<svg style="left:655px;top:380px;" width="16" height="16" viewBox="0 0 16 16"><text x="1.500" y="6.800" font-family="Liberation Serif,serif" font-size="10" fill="#9a9a9a">a</text><text x="1.500" y="14.800" font-family="Liberation Serif,serif" font-size="10" fill="#9a9a9a">z</text><path d="M11 0.500v12" stroke="#b0b0b0" stroke-width="2"/><path d="M7.400 10.500h7.200l-3.600 4.600z" fill="#b0b0b0"/></svg>
<div style="left:677px;top:379px;width:1px;height:18px;background:#8c8c8c;"></div>
<svg style="left:686px;top:380px;" width="16" height="16" viewBox="0 0 16 16"><text x="0" y="9.500" font-family="Liberation Serif,serif" font-size="13" fill="#d4531e">A</text><g transform="rotate(-38 11 11.500)"><rect x="6.200" y="9" width="9.600" height="5" rx="1.600" fill="#dfe7f2" stroke="#7f93b2" stroke-width="0.9"/><path d="M11.400 9h2.800a1.600 1.600 0 0 1 1.600 1.600v1.800a1.600 1.600 0 0 1-1.600 1.600h-2.800z" fill="#e8512a"/></g></svg>
<div style="left:708px;top:379px;width:1px;height:18px;background:#8c8c8c;"></div>
<svg style="left:717px;top:380px;" width="17" height="16" viewBox="0 0 17 16"><text x="0.300" y="8" font-family="Liberation Serif,serif" font-size="10.500" font-weight="bold" fill="#8a8a8a" letter-spacing="-0.3">AB</text><path d="M2.600 9.400L7.200 13.800L15.600 5.400" stroke="#858585" stroke-width="2.100" fill="none"/></svg>
<svg style="left:16px;top:404px;" width="16" height="16" viewBox="0 0 16 16"><text x="3.6" y="12.6" font-family="Liberation Serif,serif" font-size="15" font-weight="bold"  fill="#1c2f55" >B</text></svg>
<svg style="left:40px;top:404px;" width="16" height="16" viewBox="0 0 16 16"><text x="5.2" y="12.7" font-family="Liberation Serif,serif" font-size="16"  font-style="italic" fill="#1c2f55" >I</text></svg>
<svg style="left:64px;top:404px;" width="18" height="16" viewBox="0 0 18 16"><text x="4.6" y="12.6" font-family="Liberation Serif,serif" font-size="14.5" font-weight="bold"  fill="#1c2f55" >U</text><path d="M4.500 14.500h10.500" stroke="#1c2f55" stroke-width="1.1"/></svg>
<svg style="left:88px;top:404px;" width="18" height="16" viewBox="0 0 18 16"><text x="4.8" y="12.6" font-family="Liberation Serif,serif" font-size="15" font-weight="bold"  fill="#1c2f55" >S</text><path d="M2.500 8.500h12.500" stroke="#1c2f55" stroke-width="1.100"/></svg>
<svg style="left:108px;top:400px;" width="24" height="24" viewBox="0 0 24 24"><text x="8.5" y="15.2" font-family="Liberation Serif,serif" font-size="15.5"  font-style="italic" fill="#1c2f55" stroke="#1c2f55" stroke-width="0.450">f</text><text x="13.4" y="18.8" font-family="Liberation Serif,serif" font-size="8" font-weight="bold"  fill="#1a6ae0" stroke="#1a6ae0" stroke-width="0.300">2</text></svg>
<svg style="left:132px;top:400px;" width="24" height="24" viewBox="0 0 24 24"><text x="8.5" y="15.2" font-family="Liberation Serif,serif" font-size="15.5"  font-style="italic" fill="#1c2f55" stroke="#1c2f55" stroke-width="0.450">f</text><text x="15.2" y="10.3" font-family="Liberation Serif,serif" font-size="8" font-weight="bold"  fill="#1a6ae0" stroke="#1a6ae0" stroke-width="0.300">2</text></svg>
<div style="left:159px;top:403px;width:1px;height:18px;background:#8c8c8c;"></div>
<svg style="left:169px;top:404px;" width="16" height="16" viewBox="0 0 16 16"><text x="0.3" y="13.8" font-family="Liberation Serif,serif" font-size="18" font-weight="bold"  fill="#1c2f55" textLength="11" lengthAdjust="spacingAndGlyphs">A</text><path d="M8.800 4.600h7l-3.500-3.400z" fill="#4aa32a"/></svg>
<svg style="left:193px;top:404px;" width="16" height="16" viewBox="0 0 16 16"><text x="0.5" y="13.7" font-family="Liberation Serif,serif" font-size="14.5" font-weight="bold"  fill="#1c2f55" textLength="9.300" lengthAdjust="spacingAndGlyphs">A</text><path d="M7.800 1.200h7l-3.500 3.400z" fill="#4aa32a"/></svg>
<div style="left:215px;top:403px;width:1px;height:18px;background:#8c8c8c;"></div>
<svg style="left:225px;top:404px;" width="16" height="16" viewBox="0 0 16 16"><text x="3.7" y="10.8" font-family="Liberation Serif,serif" font-size="16" font-weight="bold"  fill="#1c2f55" textLength="8.600" lengthAdjust="spacingAndGlyphs">A</text><rect x="1" y="11.600" width="14.200" height="3.800" fill="#e8490f"/><rect x="1" y="14.600" width="14.200" height="0.800" fill="#b73808"/></svg>
<svg style="left:249px;top:404px;" width="16" height="16" viewBox="0 0 16 16"><rect x="1" y="11.600" width="14.200" height="3.800" fill="#e9bd3a" stroke="#a88418" stroke-width="0.7"/><g transform="rotate(-47 8 7)"><rect x="3.400" y="5.500" width="10.800" height="3.200" fill="#f7d21e" stroke="#8a7214" stroke-width="0.700"/><rect x="14.200" y="5.500" width="1.500" height="3.200" fill="#3a3a3a"/><path d="M3.400 5.500L0.600 7.100L3.400 8.700z" fill="#3a3a2a"/></g></svg>
<div style="left:271px;top:403px;width:1px;height:18px;background:#8c8c8c;"></div>
<div style="left:277px;top:401px;width:24px;height:21px;background:#cce4f7;border:1px solid #8cc8f4;box-sizing:border-box;"></div>
<svg style="left:282px;top:404px;" width="16" height="16" viewBox="0 0 16 16"><path d="M0 0.5h15M0 3.3h11M0 6.1h15M0 8.9h11M0 11.7h15M0 14.5h11" stroke="#1c2f55" stroke-width="1.3" fill="none"/></svg>
<svg style="left:305px;top:404px;" width="16" height="16" viewBox="0 0 16 16"><path d="M0 0.5h15M2 3.3h11M0 6.1h15M2 8.9h11M0 11.7h15M2 14.5h11" stroke="#1c2f55" stroke-width="1.3" fill="none"/></svg>
<svg style="left:329px;top:404px;" width="16" height="16" viewBox="0 0 16 16"><path d="M0 0.5h15M4 3.3h11M0 6.1h15M4 8.9h11M0 11.7h15M4 14.5h11" stroke="#1c2f55" stroke-width="1.3" fill="none"/></svg>
<svg style="left:353px;top:404px;" width="16" height="16" viewBox="0 0 16 16"><path d="M0 0.5h15M0 3.3h15M0 6.1h15M0 8.9h15M0 11.7h15M0 14.5h15" stroke="#1c2f55" stroke-width="1.3" fill="none"/></svg>
<div style="left:373px;top:401px;width:24px;height:21px;background:#cce4f7;border:1px solid #8cc8f4;box-sizing:border-box;"></div>
<svg style="left:377px;top:404px;" width="18" height="16" viewBox="0 0 18 16"><path d="M0 0.500h10M0 3.300h10M0 6.100h10M0 8.900h10M0 11.700h10M0 14.500h10" stroke="#1c2f55" stroke-width="1.200" stroke-dasharray="4 0.800 3 0.800"/><path d="M16 3v6.500h-3.500" stroke="#3c9a2c" stroke-width="1.500" fill="none"/><path d="M13.600 6.800L10.600 9.500L13.600 12.200z" fill="#3c9a2c"/></svg>
<div style="left:399px;top:403px;width:1px;height:18px;background:#8c8c8c;"></div>
<svg style="left:409px;top:404px;" width="16" height="16" viewBox="0 0 16 16"><rect x="0.500" y="1" width="2.800" height="2.800" fill="#1f5fd0"/><rect x="0.500" y="6" width="2.800" height="2.800" fill="#1f5fd0"/><rect x="0.500" y="11" width="2.800" height="2.800" fill="#1f5fd0"/><path d="M5 2.400h10M5 7.400h10M5 12.400h10" stroke="#1c2f55" stroke-width="1.200"/></svg>
<svg style="left:433px;top:404px;" width="16" height="16" viewBox="0 0 16 16"><text x="0" y="4.800" font-family="Liberation Sans,sans-serif" font-size="6.5" font-weight="bold" fill="#1f5fd0">1</text><text x="0" y="9.800" font-family="Liberation Sans,sans-serif" font-size="6.5" font-weight="bold" fill="#1f5fd0">2</text><text x="0" y="14.800" font-family="Liberation Sans,sans-serif" font-size="6.5" font-weight="bold" fill="#1f5fd0">3</text><path d="M5 2.400h10M5 7.400h10M5 12.400h10" stroke="#1c2f55" stroke-width="1.200"/></svg>
<div style="left:455px;top:403px;width:1px;height:18px;background:#8c8c8c;"></div>
<svg style="left:465px;top:404px;" width="16" height="16" viewBox="0 0 16 16"><path d="M0 1.500h15M0 13.300h15M0 15.300h10" stroke="#1c2f55" stroke-width="1.100"/><path d="M7.500 3.900h7.500M7.500 6.300h7.500M7.500 8.700h7.500M7.500 11.100h7.500" stroke="#1c2f55" stroke-width="1.600"/><path d="M0 7.300L3.800 3.900v2.200h3v2.400h-3v2.200z" fill="#3fa22a"/></svg>
<svg style="left:489px;top:404px;" width="16" height="16" viewBox="0 0 16 16"><path d="M0 1.500h15M0 13.300h15M0 15.300h10" stroke="#1c2f55" stroke-width="1.100"/><path d="M7.500 3.900h7.500M7.500 6.300h7.500M7.500 8.700h7.500M7.500 11.100h7.500" stroke="#1c2f55" stroke-width="1.600"/><path d="M6.800 7.300L3 3.900v2.200h-3v2.400h3v2.200z" fill="#3fa22a"/></svg>
<div style="left:511px;top:403px;width:1px;height:18px;background:#8c8c8c;"></div>
<svg style="left:521px;top:404px;" width="16" height="16" viewBox="0 0 16 16"><path d="M4 0.600h8M0.500 3.300h11.500M0.500 6h11.500M0.500 8.700h6" stroke="#1c2f55" stroke-width="1.100"/><rect x="0.500" y="11" width="14" height="4.400" fill="#e2470d"/></svg>
<div style="left:543px;top:403px;width:1px;height:18px;background:#8c8c8c;"></div>
<svg style="left:553px;top:404px;" width="16" height="16" viewBox="0 0 16 16"><rect x="0.500" y="0.500" width="14" height="14" fill="none" stroke="#8c8c8c" stroke-width="1" stroke-dasharray="1 1" stroke-dashoffset="0.5" shape-rendering="crispEdges"/><path d="M0.500 0v15" stroke="#8c8c8c" stroke-width="1.200"/></svg>
<svg style="left:577px;top:404px;" width="16" height="16" viewBox="0 0 16 16"><rect x="0.500" y="0.500" width="14" height="14" fill="none" stroke="#8c8c8c" stroke-width="1" stroke-dasharray="1 1" stroke-dashoffset="0.5" shape-rendering="crispEdges"/><path d="M14.500 0v15" stroke="#8c8c8c" stroke-width="1.200"/></svg>
<svg style="left:601px;top:404px;" width="16" height="16" viewBox="0 0 16 16"><rect x="0.500" y="0.500" width="14" height="14" fill="none" stroke="#8c8c8c" stroke-width="1" stroke-dasharray="1 1" stroke-dashoffset="0.5" shape-rendering="crispEdges"/><path d="M0 0.500h15" stroke="#8c8c8c" stroke-width="1.200"/></svg>
<svg style="left:625px;top:404px;" width="16" height="16" viewBox="0 0 16 16"><rect x="0.500" y="0.500" width="14" height="14" fill="none" stroke="#8c8c8c" stroke-width="1" stroke-dasharray="1 1" stroke-dashoffset="0.5" shape-rendering="crispEdges"/><path d="M0 14.500h15" stroke="#8c8c8c" stroke-width="1.200"/></svg>
<svg style="left:649px;top:404px;" width="16" height="16" viewBox="0 0 16 16"><rect x="0.500" y="0.500" width="14" height="14" fill="none" stroke="#8c8c8c" stroke-width="1" stroke-dasharray="1 1" stroke-dashoffset="0.5" shape-rendering="crispEdges"/><path d="M0.500 0v15M14.500 0v15M0 0.500h15M0 14.500h15" stroke="#8c8c8c" stroke-width="1.200"/></svg>
<svg style="left:673px;top:404px;" width="16" height="16" viewBox="0 0 16 16"><rect x="0.500" y="0.500" width="14" height="14" fill="none" stroke="#8c8c8c" stroke-width="1" stroke-dasharray="1 1" stroke-dashoffset="0.5" shape-rendering="crispEdges"/></svg>
<div style="left:13px;top:425px;width:145px;height:23px;background:#fff;border:1px solid #7a7a7a;box-sizing:border-box;"></div>
<div style="left:16px;top:428px;width:25px;height:15px;background:#0078d7;"></div>
<span style="left:16.80px;top:426.00px;font:12px/20px 'Liberation Sans',sans-serif;color:#fff;white-space:pre;letter-spacing:-0.250px;">Arial</span>
<svg style="left:143px;top:433px;" width="12" height="8" viewBox="0 0 12 8"><path d="M1.7999999999999998 1.9 L6 6.1 L10.2 1.9" fill="none" stroke="#444" stroke-width="1.05"/></svg>
<div style="left:158px;top:425px;width:62px;height:23px;background:#fff;border:1px solid #7a7a7a;box-sizing:border-box;"></div>
<span style="left:162.30px;top:426.00px;font:12px/20px 'Liberation Sans',sans-serif;color:#000;white-space:pre;transform:scaleX(0.8374);transform-origin:0 0;">12</span>
<svg style="left:205px;top:433px;" width="12" height="8" viewBox="0 0 12 8"><path d="M1.7999999999999998 1.9 L6 6.1 L10.2 1.9" fill="none" stroke="#444" stroke-width="1.05"/></svg>
<div style="left:13px;top:451px;width:834px;height:294px;background:#fff;border:1px solid #a6a8ad;box-sizing:border-box;"></div>
<div style="left:829px;top:453px;width:16px;height:290px;background:#f0f0f0;"></div>
<svg style="left:831px;top:458px;" width="12" height="8" viewBox="0 0 12 8"><path d="M2.300 6.700L5.700 3.200L9.100 6.700" fill="none" stroke="#b6b6b6" stroke-width="2"/></svg>
<svg style="left:831px;top:730px;" width="12" height="8" viewBox="0 0 12 8"><path d="M2.300 2.300L5.700 5.800L9.100 2.300" fill="none" stroke="#c0c0c0" stroke-width="2"/></svg>
<div style="left:20px;top:456px;width:1px;height:20px;background:#000;"></div>
<span style="left:713.20px;top:746.00px;font:9px/20px 'Liberation Sans',sans-serif;color:#000;white-space:pre;letter-spacing:-0.035px;">Als Textbaustein aufnehmen</span>
<div style="left:834px;top:749px;width:13px;height:13px;background:#fff;border:1px solid #333;box-sizing:border-box;"></div>
<div style="left:10px;top:774px;width:25px;height:25px;background:#cccccc;border:1px solid #bfbfbf;box-sizing:border-box;"></div>
<svg style="left:16px;top:781px;" width="12" height="12" viewBox="0 0 12 12"><rect x="0" y="0" width="12" height="12" rx="0.800" fill="#777"/><rect x="2" y="0" width="8" height="6" fill="#cfcfcf"/><rect x="2.600" y="0.200" width="6.800" height="1" fill="#6aa5d4"/><rect x="4" y="8.200" width="6" height="3.800" fill="#ccc"/><rect x="7" y="8.600" width="1.900" height="3.200" fill="#777"/></svg>
<div style="left:39px;top:774px;width:25px;height:25px;background:#e1e1e1;border:1px solid #adadad;box-sizing:border-box;"></div>
<svg style="left:43px;top:778px;" width="17" height="17" viewBox="0 0 17 17"><rect x="4.500" y="0.500" width="8" height="6" fill="#fff" stroke="#2f8fdc" stroke-width="1"/><path d="M6.500 2.500h4M6.500 4.500h4" stroke="#2f8fdc"/><rect x="1" y="7" width="15" height="8.500" rx="1.500" fill="#111"/><rect x="4" y="10.500" width="9" height="2.400" fill="#fff"/></svg>
<div style="left:66px;top:774px;width:25px;height:25px;background:#e1e1e1;border:1px solid #adadad;box-sizing:border-box;"></div>
<svg style="left:72px;top:779px;" width="14" height="15" viewBox="0 0 14 15"><path d="M1.500 0.800L12.500 7.500L1.500 14.200z" fill="#9dcb62"/></svg>
<div style="left:95px;top:774px;width:106px;height:25px;background:#cccccc;border:1px solid #bfbfbf;box-sizing:border-box;"></div>
<span style="left:104.80px;top:778.00px;font:12px/20px 'Liberation Sans',sans-serif;color:#fff;white-space:pre;letter-spacing:-0.089px;">Speichern &amp; Neu</span>
<span style="left:103.80px;top:777.00px;font:12px/20px 'Liberation Sans',sans-serif;color:#a3a3a3;white-space:pre;letter-spacing:-0.089px;">Speichern &amp; <u>N</u>eu</span>
<div style="left:587px;top:774px;width:88px;height:25px;background:#cccccc;border:1px solid #bfbfbf;box-sizing:border-box;"></div>
<span style="left:606.50px;top:778.00px;font:12px/20px 'Liberation Sans',sans-serif;color:#fff;white-space:pre;transform:scaleX(0.9537);transform-origin:0 0;">Speichern</span>
<span style="left:605.50px;top:777.00px;font:12px/20px 'Liberation Sans',sans-serif;color:#a3a3a3;white-space:pre;transform:scaleX(0.9537);transform-origin:0 0;"><u>S</u>peichern</span>
<div style="left:679px;top:774px;width:88px;height:25px;background:#e1e1e1;border:1px solid #adadad;box-sizing:border-box;"></div>
<span style="left:697.30px;top:777.00px;font:12px/20px 'Liberation Sans',sans-serif;color:#000;white-space:pre;transform:scaleX(0.9461);transform-origin:0 0;">Schließen</span>
<div style="left:771px;top:774px;width:83px;height:25px;background:#e1e1e1;border:1px solid #adadad;box-sizing:border-box;"></div>
<span style="left:800.70px;top:777.00px;font:12px/20px 'Liberation Sans',sans-serif;color:#000;white-space:pre;letter-spacing:0.125px;">Hilfe</span>
<div style="left:184px;top:463px;width:273px;height:306px;background:#f2f2f2;border:1px solid #a0a0a0;box-sizing:border-box;box-shadow:2px 2px 2px rgba(0,0,0,0.5);"></div>
<div style="left:187px;top:466px;width:265px;height:22px;background:#91c9f7;"></div>
<div style="left:215px;top:490px;width:238px;height:1px;background:#d7d7d7;"></div>
<div style="left:215px;top:584px;width:238px;height:1px;background:#d7d7d7;"></div>
<div style="left:215px;top:612px;width:238px;height:1px;background:#d7d7d7;"></div>
<div style="left:215px;top:684px;width:238px;height:1px;background:#d7d7d7;"></div>
<div style="left:215px;top:712px;width:238px;height:1px;background:#d7d7d7;"></div>
<div style="left:215px;top:740px;width:238px;height:1px;background:#d7d7d7;"></div>
<span style="left:218.10px;top:467.00px;font:bold 12px/20px 'Liberation Sans',sans-serif;color:#000;white-space:pre;letter-spacing:-0.080px;">Textbaustein einfügen</span>
<svg style="left:443px;top:472px;" width="5" height="8" viewBox="0 0 5 8"><path d="M0.300 0.300L4.300 3.600L0.300 7z" fill="#fff"/></svg>
<span style="left:218.10px;top:495.00px;font:12px/20px 'Liberation Sans',sans-serif;color:#000;white-space:pre;letter-spacing:-0.229px;">Kopieren</span>
<span style="left:399.00px;top:495.00px;font:12px/20px 'Liberation Sans',sans-serif;color:#000;white-space:pre;letter-spacing:-0.075px;">Ctrl+C</span>
<span style="left:218.10px;top:517.00px;font:12px/20px 'Liberation Sans',sans-serif;color:#000;white-space:pre;letter-spacing:-0.152px;">Ausschneiden</span>
<span style="left:399.00px;top:517.00px;font:12px/20px 'Liberation Sans',sans-serif;color:#000;white-space:pre;letter-spacing:0.075px;">Ctrl+X</span>
<span style="left:218.10px;top:539.00px;font:12px/20px 'Liberation Sans',sans-serif;color:#000;white-space:pre;letter-spacing:-0.139px;">Einfügen</span>
<span style="left:399.00px;top:539.00px;font:12px/20px 'Liberation Sans',sans-serif;color:#000;white-space:pre;letter-spacing:0.075px;">Ctrl+V</span>
<span style="left:218.10px;top:561.00px;font:12px/20px 'Liberation Sans',sans-serif;color:#000;white-space:pre;letter-spacing:-0.204px;">Alles auswählen</span>
<span style="left:399.00px;top:561.00px;font:12px/20px 'Liberation Sans',sans-serif;color:#000;white-space:pre;letter-spacing:0.075px;">Ctrl+A</span>
<span style="left:218.10px;top:589.00px;font:12px/20px 'Liberation Sans',sans-serif;color:#000;white-space:pre;letter-spacing:-0.084px;">Bild einfügen ...</span>
<span style="left:218.10px;top:617.00px;font:12px/20px 'Liberation Sans',sans-serif;color:#000;white-space:pre;letter-spacing:-0.164px;">Benutzername</span>
<span style="left:218.10px;top:639.00px;font:12px/20px 'Liberation Sans',sans-serif;color:#000;white-space:pre;letter-spacing:0.081px;">Datum</span>
<span style="left:218.10px;top:661.00px;font:12px/20px 'Liberation Sans',sans-serif;color:#000;white-space:pre;letter-spacing:-0.183px;">Uhrzeit</span>
<span style="left:218.10px;top:689.00px;font:12px/20px 'Liberation Sans',sans-serif;color:#000;white-space:pre;letter-spacing:-0.018px;">Automatisches Einfügen aktiv</span>
<span style="left:218.10px;top:717.00px;font:12px/20px 'Liberation Sans',sans-serif;color:#000;white-space:pre;letter-spacing:0.037px;">Automatische Rechtschreibprüfung</span>
<span style="left:218.10px;top:745.00px;font:12px/20px 'Liberation Sans',sans-serif;color:#000;white-space:pre;letter-spacing:0.097px;">Automatischer Zeilenumbruch</span>
<div style="left:187px;top:716px;width:22px;height:22px;background:#91c9f7;"></div>
<div style="left:187px;top:744px;width:22px;height:22px;background:#91c9f7;"></div>
<svg style="left:190px;top:719px;" width="16" height="16" viewBox="0 0 16 16"><path d="M4 7.800L6.800 10.600L12.400 4.600" fill="none" stroke="#222" stroke-width="1.300"/></svg>
<svg style="left:190px;top:747px;" width="16" height="16" viewBox="0 0 16 16"><path d="M4 7.800L6.800 10.600L12.400 4.600" fill="none" stroke="#222" stroke-width="1.300"/></svg>
<svg style="left:192px;top:470px;" width="13" height="15" viewBox="0 0 13 15"><path d="M0.500 0.500h8l3 3v10h-11z" fill="#a6d3f9" stroke="#1f1f1f" stroke-width="1.150"/><path d="M8.500 0.500v3h3" fill="#e8f4fe" stroke="#1f1f1f" stroke-width="0.900"/><path d="M2.300 5.700L4.200 1.900L6.100 5.700M3 4.400h2.400M7.500 5.300h1.900" stroke="#2f8fdc" stroke-width="0.900" fill="none"/><path d="M2.300 7.500h7.400M2.300 9.500h7.400M2.300 11.500h5.400" stroke="#2f8fdc" stroke-width="1.100"/></svg>
<svg style="left:191px;top:498px;" width="15" height="15" viewBox="0 0 15 15"><rect x="0.500" y="0.500" width="7" height="11" fill="#fbfbfb" stroke="#2f8fdc" stroke-width="1.050"/><path d="M2 3.500h1.300M2 5.500h1.300M2 7.500h1.300M2 9.500h1.300" stroke="#2f8fdc" stroke-width="1"/><path d="M4.500 2.500h6l3 3v8h-9z" fill="#fff" stroke="#1f1f1f" stroke-width="1.150"/><path d="M10.500 2.700v2.800h2.800" fill="none" stroke="#1f1f1f" stroke-width="0.900"/><path d="M6.500 5.500h2.400M6.500 7.500h5M6.500 9.500h5M6.500 11.500h5" stroke="#1f1f1f" stroke-width="1.050"/></svg>
<svg style="left:192px;top:520px;" width="13" height="15" viewBox="0 0 13 15"><path d="M0.800 0.300L3.700 0.300L8.700 9.700L7.300 10.400Z M11.400 0.300L8.500 0.300L3.500 9.700L4.900 10.400Z" fill="#1f1f1f"/><circle cx="2.700" cy="11.400" r="1.800" fill="none" stroke="#1f1f1f" stroke-width="1.200"/><circle cx="9.500" cy="11.400" r="1.800" fill="none" stroke="#1f1f1f" stroke-width="1.200"/></svg>
<svg style="left:192px;top:541px;" width="14" height="17" viewBox="0 0 14 17"><rect x="1" y="2" width="10.200" height="12" rx="1.300" fill="#2f8fdc"/><rect x="3.400" y="0.600" width="5.500" height="3.200" rx="1.200" fill="#a6d3f9" stroke="#1f1f1f" stroke-width="1.200"/><rect x="5.500" y="7.500" width="7" height="8" fill="#fff" stroke="#1f1f1f" stroke-width="1.150"/><path d="M7.300 9.500h3.500M7.300 11.500h3.500M7.300 13.500h3.500" stroke="#1f1f1f" stroke-width="1"/></svg>
<svg style="left:192px;top:565px;" width="13" height="13" viewBox="0 0 13 13"><rect x="0.600" y="0.600" width="11" height="11" fill="none" stroke="#1f1f1f" stroke-width="1.150" stroke-dasharray="2 1.660"/></svg>
<svg style="left:190px;top:592px;" width="16" height="14" viewBox="0 0 16 14"><rect x="1.600" y="1.500" width="12.800" height="10.900" rx="0.600" fill="#fff" stroke="#1f1f1f" stroke-width="1.300"/><rect x="3" y="3" width="10" height="8" fill="#2f8fdc"/><rect x="3" y="8.200" width="10" height="2.800" fill="#f0f0f0"/><path d="M3 11V8.400c1-.9 2.700-.9 3.700 0l.9.600l3.500-3.500l1.900 1.500V11z" fill="#1f1f1f"/><circle cx="7" cy="5" r="1.700" fill="#fdf6f0"/></svg>
<svg style="left:192px;top:619px;" width="13" height="16" viewBox="0 0 13 16"><circle cx="6" cy="4.900" r="3.900" fill="#1f1f1f"/><path d="M1.200 13C1.200 10.800 3 9.800 4 9.800C5.200 10.600 6.800 10.600 8 9.800C9.200 9.800 11 10.800 11 13C11 14.200 8.500 14.800 6.100 14.800C3.700 14.800 1.200 14.200 1.200 13Z" fill="#1f1f1f"/></svg>
<svg style="left:192px;top:641px;" width="13" height="15" viewBox="0 0 13 15"><rect x="0.100" y="3.400" width="12" height="3.800" fill="#2f8fdc"/><path d="M1.500 0.800v3.300M4.500 0.800v3.300M7.500 0.800v3.300M10.500 0.800v3.300" stroke="#1f1f1f" stroke-width="1.100"/><rect x="0.700" y="7.200" width="10.800" height="7" rx="0.800" fill="#fff" stroke="#1f1f1f" stroke-width="1.200"/><text x="4.100" y="13" font-family="Liberation Sans,sans-serif" font-size="6.800" font-weight="bold" fill="#1f1f1f">3</text></svg>
<svg style="left:190px;top:663px;" width="16" height="16" viewBox="0 0 16 16"><circle cx="8" cy="8" r="6.350" fill="#fff" stroke="#1f1f1f" stroke-width="1.300"/><path d="M5.300 3.800L7.900 8.100L11.100 6.400" stroke="#2f8fdc" stroke-width="1.400" fill="none"/></svg>
<div style="left:451px;top:463px;width:337px;height:100px;background:#f2f2f2;border:1px solid #a0a0a0;box-sizing:border-box;box-shadow:2px 2px 2px rgba(0,0,0,0.5);"></div>
<div style="left:483px;top:490px;width:303px;height:1px;background:#d7d7d7;"></div>
<span style="left:484.80px;top:467.00px;font:12px/20px 'Liberation Sans',sans-serif;color:#000;white-space:pre;transform:scaleX(0.9620);transform-origin:0 0;">Suchen</span>
<span style="left:484.80px;top:495.00px;font:12px/20px 'Liberation Sans',sans-serif;color:#000;white-space:pre;letter-spacing:-0.136px;">1. Ein Textbaustein vor der Synchronisation [DD]</span>
<span style="left:484.80px;top:517.00px;font:12px/20px 'Liberation Sans',sans-serif;color:#000;white-space:pre;letter-spacing:0.002px;">2. Jour fix jeden 3. Montag im Monat</span>
<span style="left:484.80px;top:539.00px;font:12px/20px 'Liberation Sans',sans-serif;color:#000;white-space:pre;letter-spacing:-0.188px;">3. test</span>
<svg style="left:361px;top:475px;" width="20" height="28" viewBox="0 0 20 28"><path d="M1.300 1.300V22.800L6.200 18.100L9.900 25.800L13.300 24.200L9.800 17.400H16.800Z" fill="#fff" stroke="#111" stroke-width="1" stroke-linejoin="miter"/></svg>
</body></html>
